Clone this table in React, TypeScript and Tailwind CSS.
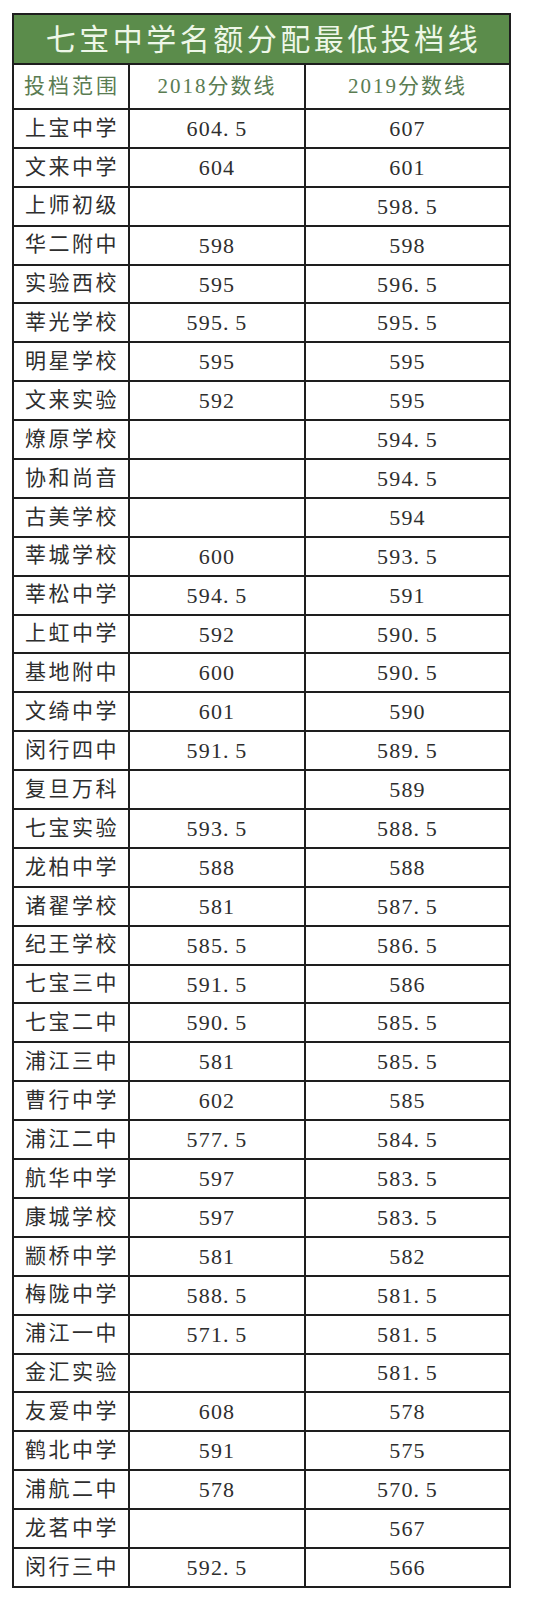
const rows: [string, string, string][] = [
  ["上宝中学", "604.5", "607"],
  ["文来中学", "604", "601"],
  ["上师初级", "", "598.5"],
  ["华二附中", "598", "598"],
  ["实验西校", "595", "596.5"],
  ["莘光学校", "595.5", "595.5"],
  ["明星学校", "595", "595"],
  ["文来实验", "592", "595"],
  ["燎原学校", "", "594.5"],
  ["协和尚音", "", "594.5"],
  ["古美学校", "", "594"],
  ["莘城学校", "600", "593.5"],
  ["莘松中学", "594.5", "591"],
  ["上虹中学", "592", "590.5"],
  ["基地附中", "600", "590.5"],
  ["文绮中学", "601", "590"],
  ["闵行四中", "591.5", "589.5"],
  ["复旦万科", "", "589"],
  ["七宝实验", "593.5", "588.5"],
  ["龙柏中学", "588", "588"],
  ["诸翟学校", "581", "587.5"],
  ["纪王学校", "585.5", "586.5"],
  ["七宝三中", "591.5", "586"],
  ["七宝二中", "590.5", "585.5"],
  ["浦江三中", "581", "585.5"],
  ["曹行中学", "602", "585"],
  ["浦江二中", "577.5", "584.5"],
  ["航华中学", "597", "583.5"],
  ["康城学校", "597", "583.5"],
  ["颛桥中学", "581", "582"],
  ["梅陇中学", "588.5", "581.5"],
  ["浦江一中", "571.5", "581.5"],
  ["金汇实验", "", "581.5"],
  ["友爱中学", "608", "578"],
  ["鹤北中学", "591", "575"],
  ["浦航二中", "578", "570.5"],
  ["龙茗中学", "", "567"],
  ["闵行三中", "592.5", "566"],
];

const font = { fontFamily: '"Liberation Serif", "Noto Sans CJK SC", serif' };

// score with a full-width-ish period, like the original song typeface
function Score({ value }: { value: string }) {
  if (!value) return null;
  const [whole, frac] = value.split(".");
  return (
    <span className="tracking-[1.2px]">
      {whole}
      {frac !== undefined && (
        <>
          <span className="inline-block w-[12.2px] text-left">.</span>
          {frac}
        </>
      )}
    </span>
  );
}

export default function App() {
  return (
    <div className="w-[540px] h-[1600px] bg-white pt-[13px] pl-[12px]" style={font}>
      <div className="w-[499px] border-2 border-[#1e1e1e]">
        {/* title */}
        <div className="h-[48px] bg-[#5b8c4b] flex items-center justify-center text-[30px] tracking-[3.5px] text-[#eef7e8] pl-[4px]">
          七宝中学名额分配最低投档线
        </div>

        {/* header */}
        <div className="grid grid-cols-[114px_176px_1fr] h-[45px] border-t-2 border-[#1e1e1e] text-[21px] text-[#5a7c52]">
          <div className="flex items-center justify-center tracking-[3px] pl-[2px]">投档范围</div>
          <div className="flex items-center justify-center border-l-2 border-[#1e1e1e] tracking-[2px]">2018分数线</div>
          <div className="flex items-center justify-center border-l-2 border-[#1e1e1e] tracking-[2px]">2019分数线</div>
        </div>

        {rows.map(([name, a, b]) => (
          <div
            key={name}
            className="grid grid-cols-[114px_176px_1fr] h-[38.9px] border-t-2 border-[#1e1e1e] text-[21px] text-[#2e2e2e]"
          >
            <div className="flex items-center justify-center tracking-[2.5px] pl-[2px]">{name}</div>
            <div className="flex items-center justify-center border-l-2 border-[#1e1e1e] text-[22px]">
              <Score value={a} />
            </div>
            <div className="flex items-center justify-center border-l-2 border-[#1e1e1e] text-[22px]">
              <Score value={b} />
            </div>
          </div>
        ))}
      </div>
    </div>
  );
}
